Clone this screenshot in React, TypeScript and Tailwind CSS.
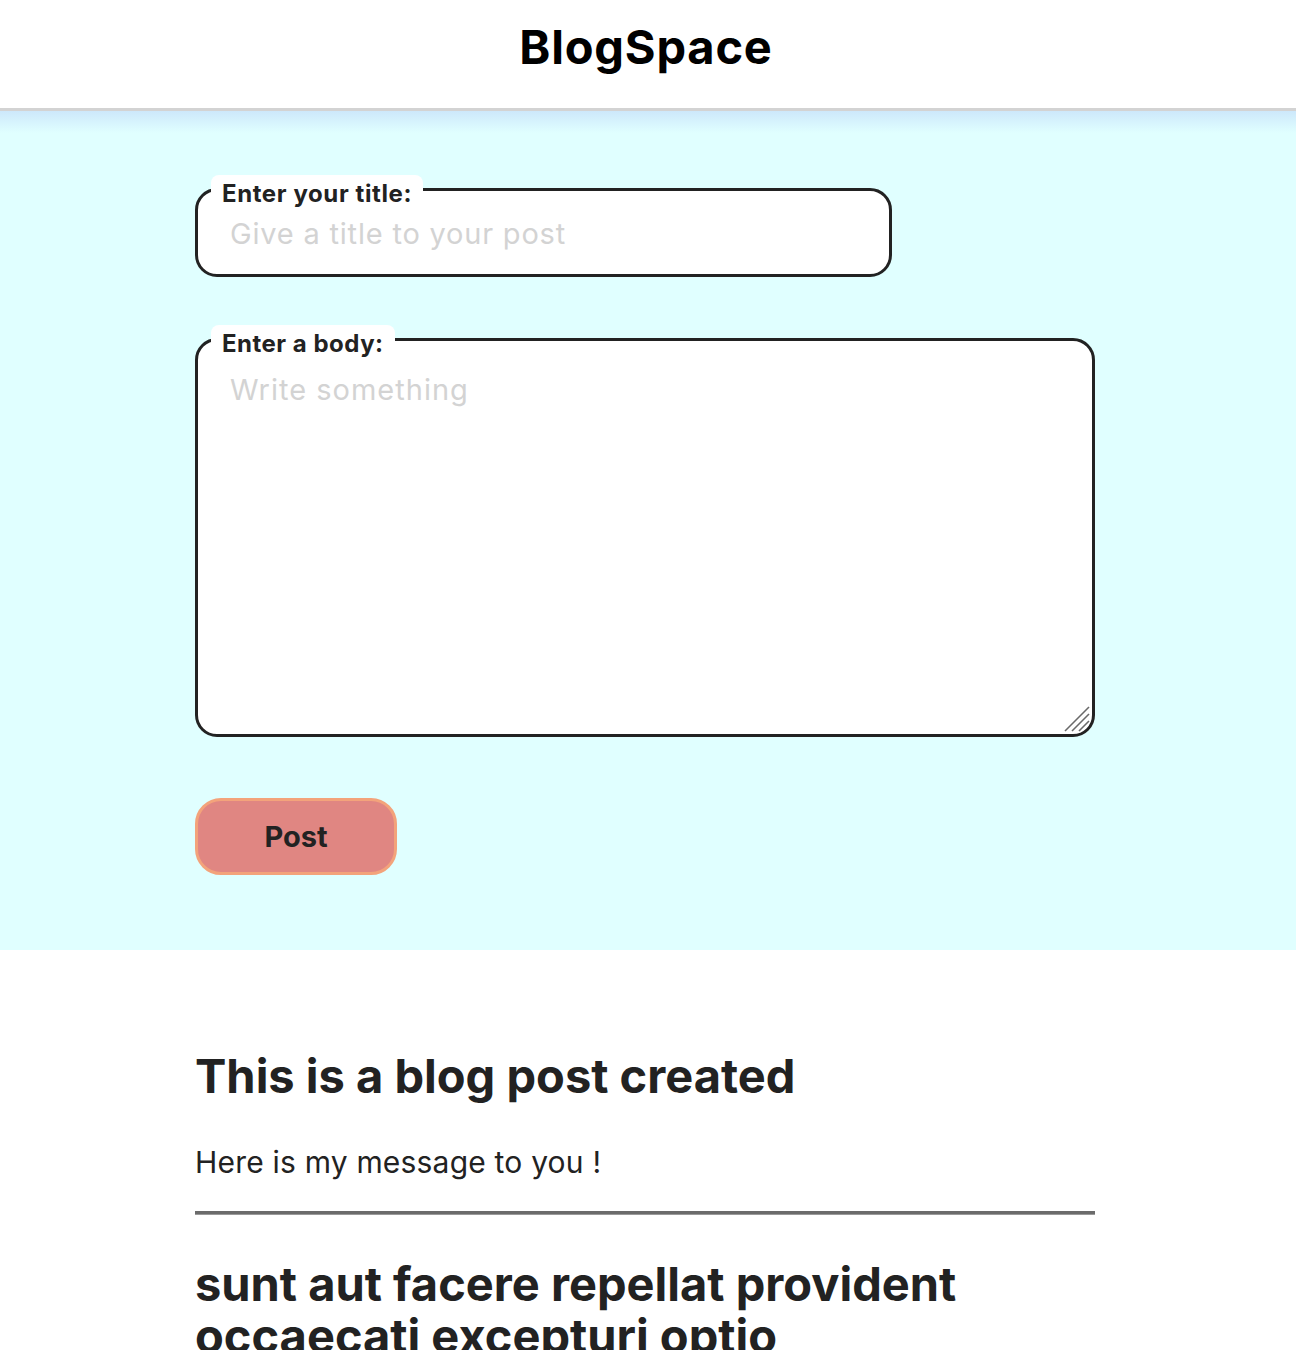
import React from "react";

const font = { fontFamily: "Inter, 'Noto Sans', sans-serif" };

export default function App() {
  return (
    <div className="min-h-screen bg-white text-[#222]" style={font}>
      <header className="h-[111px] bg-white border-b-[3px] border-[#d3d3d3] flex items-center justify-center">
        <h1 className="text-[47px] font-bold text-black tracking-[0.8px] leading-[56px] mt-[-14px] mr-[4px]">BlogSpace</h1>
      </header>

      <section className="bg-[linear-gradient(to_bottom,#cde8fb_0px,#e0ffff_22px)] pt-[77px] pb-[75px]">
        <div className="ml-[195px] w-[900px] flex flex-col items-start">
          <div className="relative w-[697px]">
            <span className="absolute left-[16px] top-[-13px] bg-white rounded-[8px] px-[11px] pt-[7px] pb-[2px] text-[24px] font-bold leading-[24px] tracking-[0.6px] text-[#222]">
              Enter your title:
            </span>
            <input
              type="text"
              placeholder="Give a title to your post"
              className="w-full h-[89px] bg-white border-[3px] border-[#222] rounded-[22px] px-[32px] pt-[2px] text-[29px] tracking-[0.8px] text-[#222] placeholder:text-[#d3d3d3] outline-none"
              style={font}
            />
          </div>

          <div className="relative w-[900px] mt-[61px]">
            <span className="absolute left-[16px] top-[-13px] bg-white rounded-[8px] px-[11px] pt-[7px] pb-[2px] text-[24px] font-bold leading-[24px] tracking-[0.5px] text-[#222] z-10">
              Enter a body:
            </span>
            <textarea
              placeholder="Write something"
              className="block w-full h-[399px] resize-none bg-white border-[3px] border-[#222] rounded-[22px] px-[32px] pt-[31px] text-[29px] leading-[36px] tracking-[1px] text-[#222] placeholder:text-[#d3d3d3] outline-none"
              style={font}
            />
            <svg
              className="absolute right-[4px] bottom-[4px] pointer-events-none"
              width="28"
              height="28"
              viewBox="0 0 28 28"
            >
              <line x1="2" y1="26" x2="26" y2="2" stroke="#6a6a6a" strokeWidth="1.6" />
              <line x1="9" y1="26" x2="26" y2="9" stroke="#6a6a6a" strokeWidth="1.6" />
              <line x1="16" y1="26" x2="26" y2="16" stroke="#6a6a6a" strokeWidth="1.6" />
            </svg>
          </div>

          <button className="mt-[61px] w-[202px] h-[77px] rounded-[26px] bg-[#e08682] border-[3px] border-[#f3a37b] text-[29px] font-bold text-[#222]">
            Post
          </button>
        </div>
      </section>

      <main className="ml-[195px] w-[900px] pt-[100px]">
        <article>
          <h2 className="text-[47px] font-bold leading-[52px] text-[#222]">This is a blog post created</h2>
          <p className="mt-[42px] text-[30px] leading-[36px] tracking-[0.2px] text-[#222]">Here is my message to you !</p>
          <div className="mt-[31px] h-[4px] bg-[#6b6b6b] border-b border-[#9a9a9a]" />
        </article>
        <article className="mt-[43px]">
          <h2 className="text-[47px] font-bold leading-[52px] text-[#222]">
            sunt aut facere repellat provident occaecati excepturi optio reprehenderit
          </h2>
        </article>
      </main>
    </div>
  );
}
